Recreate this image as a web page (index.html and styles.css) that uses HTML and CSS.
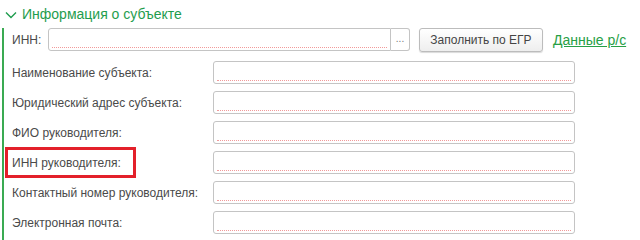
FILE: index.html
```html
<!DOCTYPE html>
<html lang="ru">
<head>
    <meta charset="UTF-8">
    <title>Информация о субъекте</title>
    <link rel="stylesheet" href="styles.css">
</head>
<body>

<div class="header">
    <svg class="chevron" width="12" height="8" viewBox="0 0 12 8">
        <polyline points="1,1.5 6,6.5 11,1.5" fill="none" stroke="#1f9d4e" stroke-width="1.4"/>
    </svg>
    <span class="title">Информация о субъекте</span>
</div>

<div class="group">
    <div class="row-inn">
        <span class="inn-label">ИНН:</span>
        <div class="field inn-field"></div>
        <div class="select-btn">...</div>
        <div class="btn">Заполнить по ЕГР</div>
        <a class="link" href="#">Данные р/с</a>
    </div>

    <div class="rows">
        <div class="row">
            <span class="label">Наименование субъекта:</span>
            <div class="field"></div>
        </div>
        <div class="row">
            <span class="label">Юридический адрес субъекта:</span>
            <div class="field"></div>
        </div>
        <div class="row">
            <span class="label">ФИО руководителя:</span>
            <div class="field"></div>
        </div>
        <div class="row">
            <span class="label marked">ИНН руководителя:</span>
            <div class="field"></div>
        </div>
        <div class="row">
            <span class="label">Контактный номер руководителя:</span>
            <div class="field"></div>
        </div>
        <div class="row">
            <span class="label">Электронная почта:</span>
            <div class="field"></div>
        </div>
    </div>
</div>

</body>
</html>
```

FILE: styles.css
```css
body {
    margin: 0;
    background-color: #FFFFFF;
    font-family: "Liberation Sans", Arial, sans-serif;
    font-size: 12px;
    color: #4a4a4a;
    white-space: nowrap;
}
.header {
    height: 28px;
    display: flex;
    align-items: center;
    padding-left: 5px;
}
.chevron {
    margin-right: 5px;
    margin-top: 1px;
}
.title {
    font-size: 14px;
    color: #1f9d4e; /* зелёный заголовок группы */
}
.group {
    margin-left: 2px;
    border-left: 2px solid #3aaa52;
    padding-left: 8px;
    height: 212px;
}
.row-inn {
    display: flex;
    align-items: center;
    height: 23px;
}
.inn-label {
    width: 36px;
    flex-shrink: 0;
}
.field {
    position: relative;
    flex-shrink: 0;
    box-sizing: border-box;
    height: 23px;
    width: 362px;
    border: 1px solid #c4c4c4;
    border-radius: 3px;
    background-color: #FFFFFF;
}
/* пунктир обязательного поля */
.field::after {
    content: "";
    position: absolute;
    left: 3px;
    right: 3px;
    bottom: 2px;
    border-bottom: 1px dotted #f29a9a;
}
.inn-field {
    width: 343px;
    border-radius: 3px 0 0 3px;
}
.select-btn {
    flex-shrink: 0;
    box-sizing: border-box;
    width: 19px;
    height: 23px;
    border: 1px solid #c4c4c4;
    border-left: none;
    border-radius: 0 3px 3px 0;
    font-size: 10px;
    color: #777;
    text-align: center;
    line-height: 19px;
}
.btn {
    flex-shrink: 0;
    box-sizing: border-box;
    height: 24px;
    margin-left: 9px;
    width: 124px;
    border: 1px solid #bcbcbc;
    border-radius: 3px;
    background: linear-gradient(#ffffff, #eeeeee);
    box-shadow: 0 1px 1px rgba(0,0,0,0.15);
    color: #444;
    line-height: 22px;
    text-align: center;
}
.link {
    margin-left: 10px;
    font-size: 14px;
    color: #27a046;
    text-decoration: underline;
}
.rows {
    margin-top: 10px;
    display: flex;
    flex-direction: column;
    gap: 7px;
}
.row {
    display: flex;
    align-items: center;
}
.label {
    width: 201px;
    flex-shrink: 0;
}
.marked {
    position: relative;
}
/* красная рамка-выделение поверх подписи */
.marked::before {
    content: "";
    position: absolute;
    left: -7px;
    top: -9px;
    width: 125px;
    height: 25px;
    border: 3px solid #e3202a;
}
```
